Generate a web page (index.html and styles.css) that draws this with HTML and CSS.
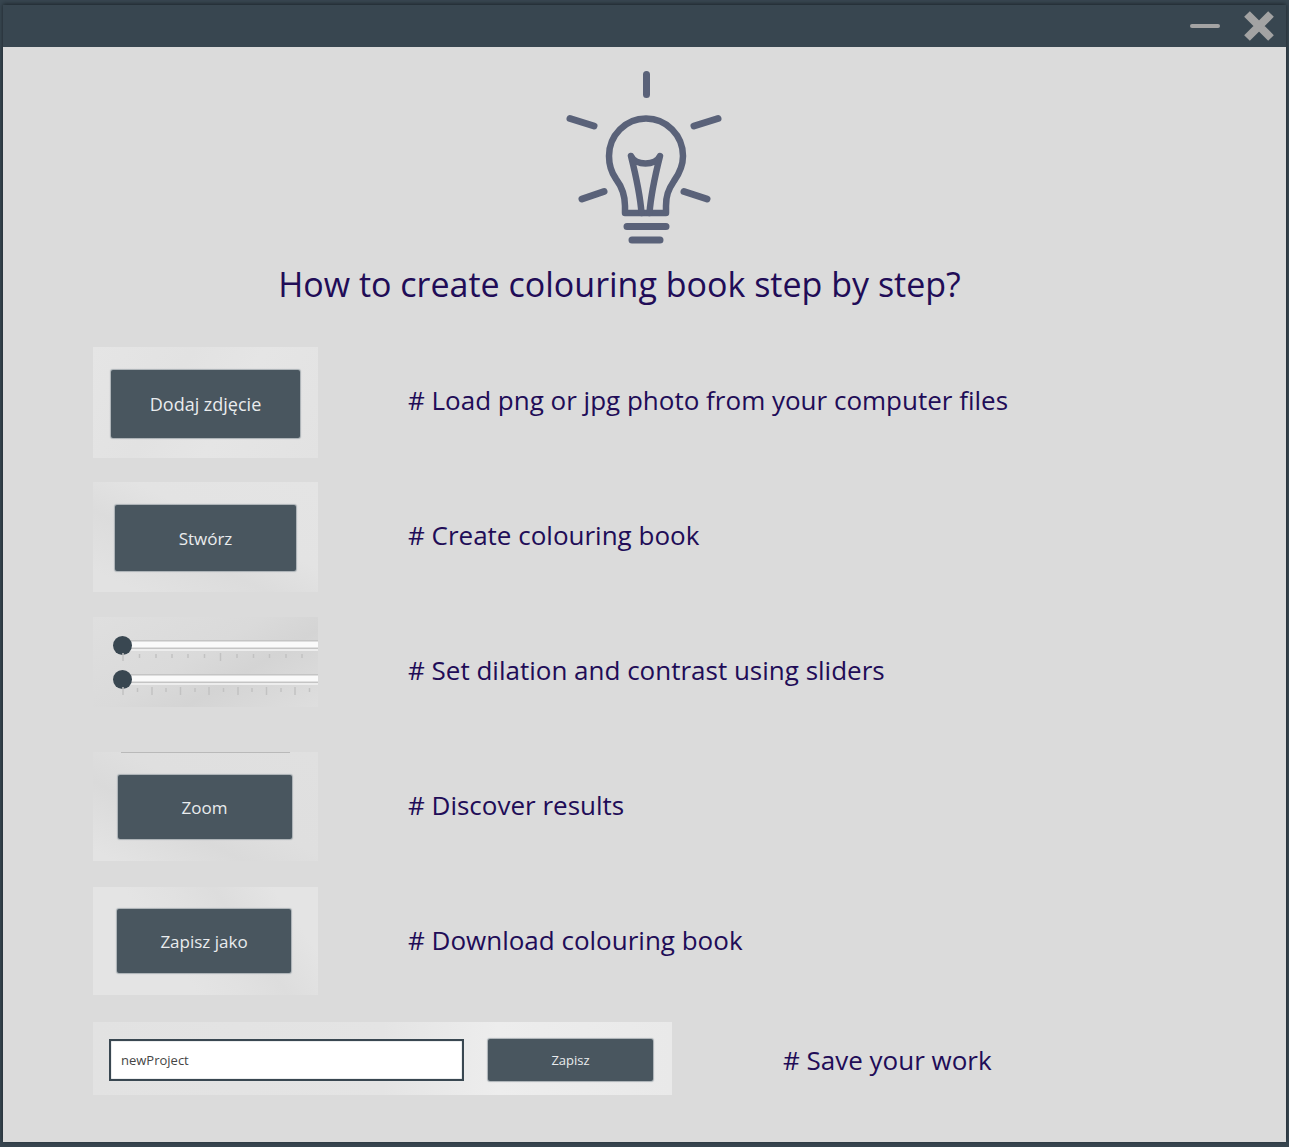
FILE: index.html
```html
<!DOCTYPE html>
<html lang="en">
<head>
<meta charset="utf-8">
<title>Colouring book help</title>
<link rel="stylesheet" href="styles.css">
</head>
<body>
<div class="window">
  <header class="titlebar">
    <button class="window-button" type="button" aria-label="Minimize">
      <svg width="30" height="30" viewBox="0 0 30 30"><path d="M2 15H28" stroke="#a3a3a3" stroke-width="4" stroke-linecap="round"/></svg>
    </button>
    <button class="window-button" type="button" aria-label="Close">
      <svg width="30" height="30" viewBox="0 0 30 30"><path d="M3 3L27 27M27 3L3 27" stroke="#a3a3a3" stroke-width="8"/></svg>
    </button>
  </header>
  <main class="content">
    <svg class="bulb" width="190" height="184" viewBox="0 0 190 184" fill="none" stroke="#5a6279" stroke-width="7" stroke-linecap="round" stroke-linejoin="round" aria-hidden="true">
      <path d="M96.500 8.500V28.500M20 52.500L44 60M168 52.500L144 60M32 133L54 125.500M157 133L134 125.500"/>
      <path d="M75 147V140C75 130 72 121 66 113C61 106 59 100 59 90A37 37.500 0 0 1 133 90C133 100 129 108 124 115C118 124 116 130 116 140V147Z" stroke-width="6.500"/>
      <path d="M81 90C85 100 106 100 110 90C106 106 101 127 99.500 147M81 90C85 106 90 127 91.500 147" stroke-width="6.500"/>
      <path d="M77 160.500H116M82 174H110"/>
    </svg>
    <h1 class="title">How to create colouring book step by step?</h1>
    <ol class="steps">
      <li class="step">
        <div class="panel panel-add"><button class="action action-add" type="button">Dodaj zdjęcie</button></div>
        <p class="caption"># Load png or jpg photo from your computer files</p>
      </li>
      <li class="step">
        <div class="panel panel-create"><button class="action action-create" type="button">Stwórz</button></div>
        <p class="caption"># Create colouring book</p>
      </li>
      <li class="step">
        <div class="panel panel-sliders">
          <div class="slider">
            <input class="range" type="range" min="0" max="20" value="0" aria-label="Dilation">
            <svg class="ticks" width="205" height="8" stroke="#c2c2c2" stroke-width="1.500"><path d="M10 0V8M107.500 0V8"/><path d="M26.500 1V5M43 1V5M59 1V5M75 1V5M91.500 1V5M124 1V5M140.500 1V5M156.500 1V5M173 1V5M189 1V5"/></svg>
          </div>
          <div class="slider">
            <input class="range" type="range" min="0" max="20" value="0" aria-label="Contrast">
            <svg class="ticks" width="205" height="8" stroke="#c2c2c2" stroke-width="1.500"><path d="M10 0V8M39 0V8M67.500 0V8M96 0V8M125 0V8M153.500 0V8M182 0V8"/><path d="M24.500 1V5M53 1V5M82 1V5M110.500 1V5M139 1V5M168 1V5M196.500 1V5"/></svg>
          </div>
        </div>
        <p class="caption"># Set dilation and contrast using sliders</p>
      </li>
      <li class="step">
        <div class="panel panel-zoom"><button class="action action-medium" type="button">Zoom</button></div>
        <p class="caption"># Discover results</p>
      </li>
      <li class="step">
        <div class="panel panel-export"><button class="action action-medium" type="button">Zapisz jako</button></div>
        <p class="caption"># Download colouring book</p>
      </li>
      <li class="step step-save">
        <div class="panel panel-save">
          <input class="project-name" type="text" value="newProject" aria-label="Project name">
          <button class="action action-save" type="button">Zapisz</button>
        </div>
        <p class="caption"># Save your work</p>
      </li>
    </ol>
  </main>
</div>
</body>
</html>
```
FILE: styles.css
```css
* {
  box-sizing: border-box;
}

body {
  margin: 0;
  padding: 5px 3px;
  min-height: 100vh;
  display: flex;
  background: #384650;
  font-family: "Open Sans", "Noto Sans", sans-serif;
}

.window {
  flex: 1;
  min-width: 0;
  background: #dbdbdb;
  box-shadow: 0 -1px 4px #1b242b;
}

.titlebar {
  display: flex;
  justify-content: flex-end;
  align-items: center;
  gap: 24px;
  height: 42px;
  padding-right: 12px;
  background: #384650;
}

.window-button {
  display: flex;
  padding: 0;
  border: 0;
  background: none;
}

.content {
  padding: 19px 90px 0;
}

.bulb {
  display: block;
  margin: 0 auto;
}

.title {
  margin: 8px 0 0;
  padding-right: 50px;
  color: #210c57;
  font-size: 34px;
  font-weight: 400;
  line-height: 52px;
  text-align: center;
}

.steps {
  margin: 0;
  padding: 37px 0 0;
  list-style: none;
}

.step {
  display: flex;
  align-items: flex-start;
  gap: 90px;
  min-height: 135px;
}

.step-save {
  gap: 111px;
  min-height: 73px;
}

.caption {
  margin: 0;
  color: #210c57;
  font-size: 26px;
  line-height: 106px;
}

.step-save .caption {
  line-height: 76px;
}

.panel {
  display: flex;
  flex: none;
  justify-content: center;
  align-items: center;
  width: 225px;
  padding-top: 2px;
  background: linear-gradient(120deg, #e5e5e5, #e2e2e2 35%, #e5e5e5 60%, #e2e2e2);
}

.panel-add {
  height: 111px;
}

.panel-create {
  height: 110px;
  background: linear-gradient(25deg, #e2e2e2 10%, #dcdcdc 38%, #e3e3e3 60%, #e4e4e4);
}

.panel-zoom {
  height: 109px;
  padding: 1px 2px 0 0;
  background:
    linear-gradient(#b9b9b9, #b9b9b9) 28px 0 / 169px 1px no-repeat,
    linear-gradient(28deg, #e3e3e3 5%, #dadada 35%, #dfdfdf 55%, #e0e0e0);
}

.panel-export {
  height: 108px;
  padding: 0 3px 0 0;
  background: linear-gradient(55deg, #e4e4e4 35%, #e1e1e1 50%, #dddddd 65%, #e4e4e4 85%);
}

.action {
  border: 0;
  border-radius: 2px;
  padding: 0;
  background: #49565f;
  box-shadow: 0 0 1px 1px #a9b0b4;
  color: #e9ecee;
  font-family: "Open Sans", "Noto Sans", sans-serif;
  font-size: 17px;
}

.action-add {
  width: 189px;
  height: 68px;
  font-size: 18px;
}

.action-create {
  width: 181px;
  height: 66px;
}

.action-medium {
  width: 174px;
  height: 64px;
}

.panel-sliders {
  flex-direction: column;
  align-items: flex-end;
  justify-content: flex-start;
  gap: 8px;
  height: 90px;
  padding-top: 18px;
  overflow: hidden;
  background: linear-gradient(150deg, #dfdfdf, #dadada 45%, #d4d4d4 65%, #dedede);
}

.slider {
  width: 205px;
}

.range {
  display: block;
  width: 240px;
  height: 20px;
  margin: 0 0 -2px;
  appearance: none;
  background: linear-gradient(#c4c4c4 0 1px, #dedede 1px 2px, #fafafa 2px 7px, #e0e0e0 7px 8px, #c4c4c4 8px 9px, #ededed 9px 11px) 10px 5px / 100% 11px no-repeat;
}

.range::-webkit-slider-thumb {
  appearance: none;
  width: 19px;
  height: 19px;
  border-radius: 50%;
  background: #394751;
}

.ticks {
  display: block;
}

.panel-save {
  width: 579px;
  height: 73px;
  gap: 24px;
  padding: 2px 19px 0 16px;
  background: linear-gradient(90deg, #e2e2e2, #e4e4e4 50%, #ededed 70%, #e9e9e9);
}

.project-name {
  flex: 1;
  min-width: 0;
  height: 42px;
  padding: 0 10px;
  border: 2px solid #394751;
  border-radius: 0;
  outline: 0;
  background: #fff;
  box-shadow: inset 0 0 1px #394751;
  color: #454545;
  font-family: "Open Sans", "Noto Sans", sans-serif;
  font-size: 13px;
}

.action-save {
  width: 165px;
  height: 42px;
  font-size: 13px;
}
```
